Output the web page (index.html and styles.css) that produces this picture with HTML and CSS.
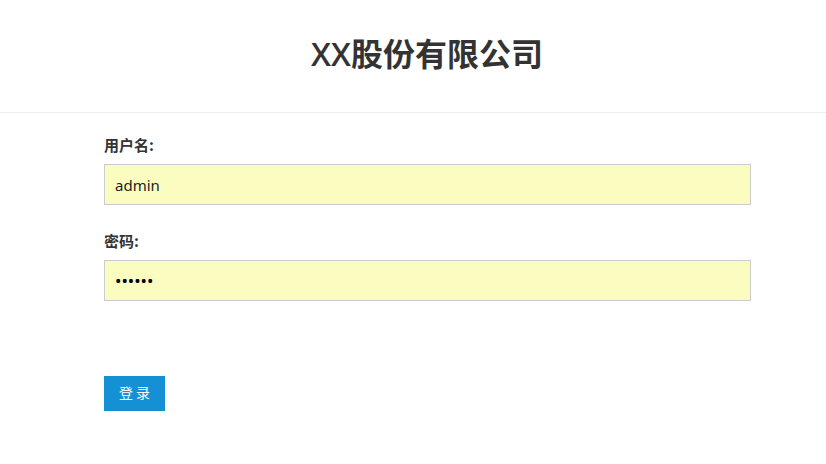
FILE: index.html
```html
<!DOCTYPE html>
<html lang="zh">
<head>
<meta charset="utf-8">
<title>登录</title>
<link rel="stylesheet" href="styles.css">
</head>
<body>
<header class="header">
  <h1 class="title"><span class="latin">XX</span>股份有限公司</h1>
</header>
<main class="form">
  <div class="field">
    <label class="label" for="user">用户名:</label>
    <input class="input" id="user" type="text" value="admin">
  </div>
  <div class="field">
    <label class="label" for="pwd">密码:</label>
    <input class="input input-pwd" id="pwd" type="password" value="123456">
  </div>
  <div class="actions">
    <button class="btn" type="button">登 录</button>
  </div>
</main>
</body>
</html>
```
FILE: styles.css
```css
html, body {
  margin: 0;
  padding: 0;
  background: #fff;
}
body {
  font-family: "Noto Sans", "Noto Sans CJK SC", sans-serif;
  color: #333;
}
.header {
  height: 113px;
  border-bottom: 1px solid #eeeeee;
  box-sizing: border-box;
  display: flex;
  justify-content: center;
  padding-top: 28px;
  padding-left: 28px;
}
.title {
  margin: 0;
  font-family: "Noto Sans CJK SC", "Noto Sans", sans-serif;
  font-size: 32px;
  font-weight: 700;
  line-height: 48px;
  color: #333;
}
.latin {
  font-family: "Open Sans", sans-serif;
  font-weight: 600;
}
.form {
  margin-left: 104px;
  width: 647px;
  padding-top: 21px;
}
.field {
  display: flex;
  flex-direction: column;
  margin-bottom: 25px;
}
.label {
  font-family: "Noto Sans CJK SC", sans-serif;
  font-size: 15px;
  font-weight: 700;
  line-height: 22px;
  margin-bottom: 8px;
  color: #333;
}
.input {
  box-sizing: border-box;
  height: 41px;
  width: 647px;
  border: 1px solid #cccccc;
  background: #fafdbf;
  padding: 0 10px;
  font-family: "Noto Sans", "Noto Sans CJK SC", sans-serif;
  font-size: 15px;
  color: #222;
  outline: none;
}
.input-pwd {
  font-size: 17px;
  letter-spacing: 0;
  color: #000;
}
.actions {
  padding-top: 50px;
}
.btn {
  width: 61px;
  height: 35px;
  border: 0;
  background: #1690d5;
  color: #fff;
  font-family: "Noto Sans CJK SC", sans-serif;
  font-size: 14px;
  padding: 0 0 3px;
  cursor: pointer;
}
```
